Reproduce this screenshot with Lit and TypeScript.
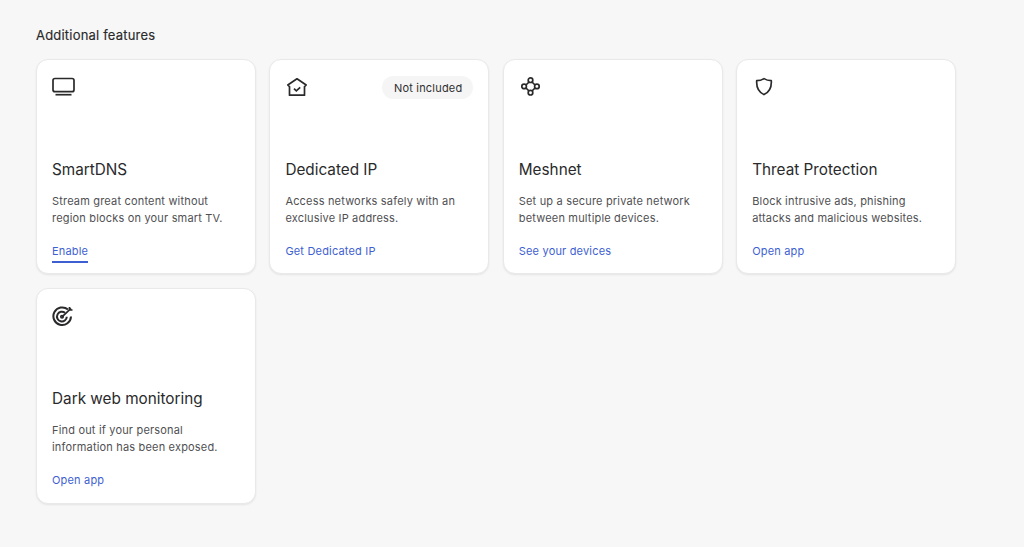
import { LitElement, html, css, svg } from "lit";
import { customElement } from "lit/decorators.js";

const icons = {
  tv: svg`<rect x="1" y="3.500" width="21" height="13.200" rx="2" /><path d="M3.500 19.700h16" />`,
  home: svg`<path d="M12 3.800 2.800 10 4.500 11.600V20.200H19.500V11.600L21.200 10Z" stroke-linejoin="round"/><path d="M9 13.700l2.300 2.200 3.900-3.600" />`,
  mesh: svg`<circle cx="11.500" cy="5.200" r="2.300"/><circle cx="11.500" cy="17.700" r="2.300"/><circle cx="5.100" cy="11.400" r="2.300"/><circle cx="17.900" cy="11.400" r="2.300"/><path d="M10 7 7 10M13 7l3 3M7 13l3 3M16 13l-3 3"/>`,
  shield: svg`<path d="M12 3.600C14 4.900 16.500 5.600 19.300 5.700 19.700 12 17.500 17 12 19.600 6.500 17 4.300 12 4.700 5.700 7.500 5.600 10 4.900 12 3.600Z" stroke-linejoin="round"/>`,
  target: svg`<path d="M16 5.600A8.800 8.800 0 1 0 19 12.500" stroke-width="2" /><path d="M13 8.800A4.900 4.900 0 1 0 14.800 12.800" stroke-width="2" /><circle cx="10" cy="12.800" r="1.200" /><path d="M10 12.800 19 4.300M17.500 3v3h3" />`,
};

const cards = [
  { icon: "tv", title: "SmartDNS", lines: ["Stream great content without", "region blocks on your smart TV."], link: "Enable", active: true },
  { icon: "home", title: "Dedicated IP", lines: ["Access networks safely with an", "exclusive IP address."], link: "Get Dedicated IP", badge: "Not included" },
  { icon: "mesh", title: "Meshnet", lines: ["Set up a secure private network", "between multiple devices."], link: "See your devices" },
  { icon: "shield", title: "Threat Protection", lines: ["Block intrusive ads, phishing", "attacks and malicious websites."], link: "Open app" },
  { icon: "target", title: "Dark web monitoring", lines: ["Find out if your personal", "information has been exposed."], link: "Open app" },
] as const;

@customElement("app-root")
export class AppRoot extends LitElement {
  static styles = css`
    :host {
      display: block;
      min-height: 547px;
      background: #f7f7f7;
      box-sizing: border-box;
      padding: 27px 68px 0 36px;
      font-family: Inter, "Liberation Sans", sans-serif;
      color: #2a2a2c;
    }
    h2 {
      margin: 0 0 15px;
      font-size: 13px;
      line-height: 17px;
      font-weight: 400;
      letter-spacing: 0.2px;
      -webkit-text-stroke: 0.15px #2a2a2c;
    }
    .grid {
      display: grid;
      grid-template-columns: repeat(4, 220px);
      grid-auto-rows: 215.400px;
      gap: 14px 13.400px;
    }
    .card {
      position: relative;
      box-sizing: border-box;
      background: #fff;
      border: 1px solid #e9e9e9;
      border-radius: 12px;
      box-shadow: 0 1px 2px rgba(0, 0, 0, 0.08);
      padding: 15px 15px 0;
      display: flex;
      flex-direction: column;
    }
    .top {
      flex: 0 0 84px;
      display: flex;
      align-items: flex-start;
    }
    svg {
      display: block;
      fill: none;
      stroke: #2a2a2c;
      stroke-width: 1.700;
    }
    .badge {
      position: absolute;
      top: 16px;
      right: 15px;
      height: 23px;
      line-height: 24px;
      padding: 0 11px 0 11.500px;
      border-radius: 12px;
      background: #f5f5f5;
      font-size: 11px;
      letter-spacing: 0.2px;
      color: #2f2f31;
    }
    h3 {
      margin: 0;
      font-size: 15.300px;
      line-height: 22px;
      font-weight: 400;
      color: #2a2a2c;
    }
    p {
      margin: 12px 0 0;
      font-size: 11px;
      line-height: 17px;
      color: #505053;
      letter-spacing: 0.18px;
      white-space: nowrap;
    }
    .link {
      align-self: flex-start;
      margin-top: 16px;
      font-size: 11px;
      line-height: 17px;
      color: #3e5fd2;
      letter-spacing: 0.18px;
      padding-bottom: 1px;
      border-bottom: 2px solid transparent;
    }
    .link.active {
      border-bottom-color: #3e5fd2;
    }
  `;

  render() {
    return html`
      <h2>Additional features</h2>
      <div class="grid">
        ${cards.map(
          (c) => html`<div class="card">
            <div class="top">
              <svg width="24" height="24" viewBox="0 0 24 24">${icons[c.icon]}</svg>
            </div>
            ${"badge" in c ? html`<span class="badge">${c.badge}</span>` : ""}
            <h3>${c.title}</h3>
            <p>${c.lines[0]}<br />${c.lines[1]}</p>
            <span class="link ${"active" in c ? "active" : ""}">${c.link}</span>
          </div>`
        )}
      </div>
    `;
  }
}
